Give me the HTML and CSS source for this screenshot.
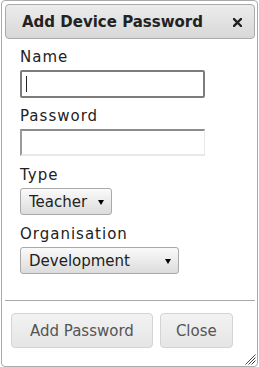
FILE: index.html
```html
<!DOCTYPE html>
<html lang="en">
<head>
  <meta charset="UTF-8">
  <meta name="viewport" content="width=device-width, initial-scale=1.0">
  <title>Add Device Password</title>
  <link rel="stylesheet" href="styles.css">
</head>
<body>
  <div class="dialog">
    <div class="titlebar">
      <span class="title">Add Device Password</span>
      <span class="close-icon">
        <svg width="9" height="9" viewBox="0 0 9 9">
          <path d="M1 1 L8 8 M8 1 L1 8" stroke="#222" stroke-width="2.4" stroke-linecap="square"/>
        </svg>
      </span>
    </div>

    <form class="content">
      <label class="field-label">Name</label>
      <div class="input-wrap">
        <input type="text" class="text focused" value="">
        <span class="caret"></span>
      </div>

      <label class="field-label">Password</label>
      <input type="password" class="text" value="">

      <label class="field-label">Type</label>
      <span class="select-wrap">
        <select class="select type">
          <option>Teacher</option>
          <option>Student</option>
        </select>
      </span>

      <label class="field-label">Organisation</label>
      <span class="select-wrap">
        <select class="select org">
          <option>Development</option>
        </select>
      </span>
    </form>

    <div class="buttonpane">
      <button class="btn add">Add Password</button>
      <button class="btn">Close</button>
    </div>

    <svg class="resize" width="12" height="12" viewBox="0 0 12 12">
      <path d="M11.5 1.5 L1.5 11.5 M11.5 4.5 L4.5 11.5 M11.5 7.5 L7.5 11.5" stroke="#444" stroke-width="1"/>
    </svg>
  </div>
</body>
</html>
```

FILE: styles.css
```css
html, body {
  margin: 0;
  padding: 0;
  background: #fff;
}
body {
  font-family: "DejaVu Sans", Verdana, sans-serif;
  color: #222;
}
.dialog {
  position: relative;
  box-sizing: border-box;
  height: 367px;
  margin: 0 1px;
  padding: 3px 2px 3px 3px;
  border: 1px solid #aaa;
  border-radius: 4px;
  background: #fff;
}
.titlebar {
  display: flex;
  align-items: center;
  justify-content: space-between;
  box-sizing: border-box;
  height: 35px;
  padding: 0 12px 0 16px;
  border: 1px solid #aaa;
  border-radius: 4px;
  background: linear-gradient(#ececec, #d8d8d8);
}
.title {
  font-size: 15px;
  font-weight: bold;
  color: #222;
}
.close-icon {
  display: flex;
  margin-top: 1px;
}
.content {
  display: flex;
  flex-direction: column;
  align-items: flex-start;
  padding: 9px 15px 16px;
  margin: 0;
}
.field-label {
  font-size: 15px;
  line-height: 18px;
  letter-spacing: 1px;
  margin-bottom: 4px;
}
.text {
  box-sizing: border-box;
  width: 185px;
  height: 27px;
  margin: 0 0 10px;
  padding: 0 4px;
  font: 15px "DejaVu Sans", sans-serif;
  border-style: solid;
  border-width: 2px 1px 2px 2px;
  border-color: #8c8c8c #e8e8e8 #e8e8e8 #9a9a9a;
  outline: none;
  background: #fff;
}
.input-wrap {
  position: relative;
}
.text.focused {
  height: 28px;
  margin-bottom: 9px;
  border: 2px solid #7d7d7d;
  border-radius: 2px;
}
.caret {
  position: absolute;
  left: 6px;
  top: 6px;
  width: 1px;
  height: 16px;
  background: #222;
}
.select-wrap {
  position: relative;
  display: inline-block;
  margin-bottom: 10px;
}
.select-wrap::after {
  content: "";
  position: absolute;
  right: 8px;
  top: 12px;
  border-left: 3px solid transparent;
  border-right: 3px solid transparent;
  border-top: 5px solid #000;
}
.select {
  -webkit-appearance: none;
  appearance: none;
  box-sizing: border-box;
  height: 27px;
  margin: 0;
  padding: 0 20px 0 8px;
  font: 15px "DejaVu Sans", sans-serif;
  color: #222;
  border: 1px solid #a9a9a9;
  border-radius: 3px;
  background: linear-gradient(#fafafa, #dcdcdc);
}
.select.type {
  width: 92px;
}
.select.org {
  width: 159px;
}
.buttonpane {
  display: flex;
  gap: 7px;
  padding: 12px 6px;
  border-top: 1px solid #aaa;
}
.btn {
  box-sizing: border-box;
  height: 35px;
  padding: 0 15px;
  font: 15px "DejaVu Sans", sans-serif;
  color: #555;
  border: 1px solid #d3d3d3;
  border-radius: 4px;
  background: linear-gradient(#f2f2f2, #e5e5e5);
}
.btn.add {
  padding: 0 18px;
}
.resize {
  position: absolute;
  right: 1px;
  bottom: 1px;
}
```
